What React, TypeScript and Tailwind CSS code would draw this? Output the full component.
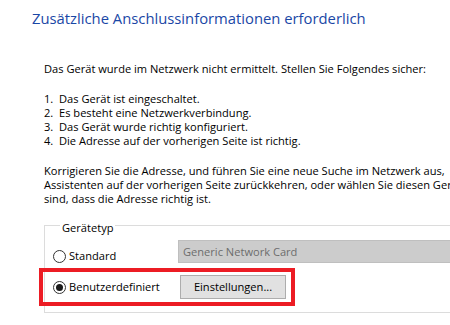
const FONT = "font-['Open_Sans',sans-serif]";

const Radio = ({ checked, label }: { checked?: boolean; label: string }) => (
  <label className="flex items-center">
    <span className="mr-[3px] flex h-[13px] w-[13px] items-center justify-center rounded-full border border-[#333] bg-white">
      {checked && <span className="h-[7px] w-[7px] rounded-full bg-[#1a1a1a]" />}
    </span>
    <span className="leading-[14px]">{label}</span>
  </label>
);

export default function App() {
  return (
    <div className={`relative h-[325px] w-[450px] overflow-hidden bg-white pt-[8px] text-[11.1px] text-black ${FONT}`}>
      <h1 className="pl-[32px] text-[14.8px] leading-[20px] text-[#1a47a6]">
        Zusätzliche Anschlussinformationen erforderlich
      </h1>

      <div className="mt-[34px] pl-[44px] leading-[14px] whitespace-nowrap">
        <p>Das Gerät wurde im Netzwerk nicht ermittelt. Stellen Sie Folgendes sicher:</p>

        <ol className="mt-[16px]">
          <li>1.&nbsp; Das Gerät ist eingeschaltet.</li>
          <li>2.&nbsp; Es besteht eine Netzwerkverbindung.</li>
          <li>3.&nbsp; Das Gerät wurde richtig konfiguriert.</li>
          <li>4.&nbsp; Die Adresse auf der vorherigen Seite ist richtig.</li>
        </ol>

        <p className="mt-[16px]">
          Korrigieren Sie die Adresse, und führen Sie eine neue Suche im Netzwerk aus,&nbsp;&nbsp;indem Sie zum
          <br />
          Assistenten auf der vorherigen Seite zurückkehren, oder wählen Sie diesen Gerätetyp aus, wenn Sie sicher
          <br />
          sind, dass die Adresse richtig ist.
        </p>

        <fieldset className="mt-[9px] w-[430px] border border-[#dcdcdc] pb-[13px] pl-[8px]">
          <legend className="ml-[7px] px-[2px] pt-[6px] leading-[14px]">Gerätetyp</legend>

          <div className="mt-[5px] flex items-start">
            <div className="mt-[9px] w-[125px]">
              <Radio label="Standard" />
            </div>
            <div className="flex h-[23px] flex-1 items-center border border-[#bfbfbf] bg-[#cccccc] pl-[4px] text-[#6d6d6d]">
              Generic Network Card
            </div>
          </div>

          <div className="mt-[12px] flex items-center">
            <div className="w-[125px]">
              <Radio checked label="Benutzerdefiniert" />
            </div>
            <button
              type="button"
              className="ml-[2px] h-[24px] w-[106px] border border-[#adadad] bg-[#e1e1e1] leading-[14px]"
            >
              Einstellungen...
            </button>
          </div>
        </fieldset>
      </div>

      {/* Markierung */}
      <div className="pointer-events-none absolute left-[39px] top-[268px] h-[38px] w-[256px] border-4 border-[#ec1c24]" />
    </div>
  );
}
